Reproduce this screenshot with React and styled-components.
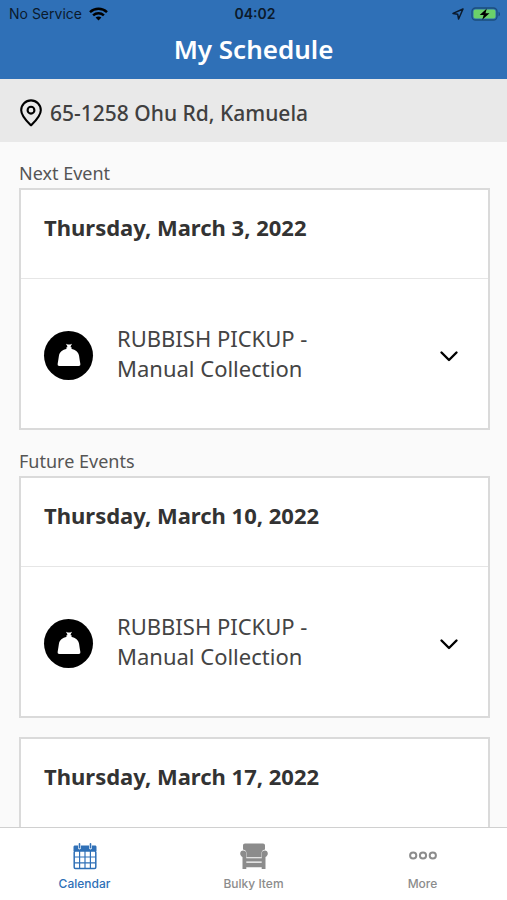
import React, { useState } from "react";
import styled, { createGlobalStyle } from "styled-components";

const GlobalStyle = createGlobalStyle`
  * { box-sizing: border-box; }
  body { margin: 0; background: #fafafa; }
`;

const Screen = styled.div`
  display: flex;
  flex-direction: column;
  height: 100vh;
  overflow: hidden;
  background: #fafafa;
  color: #333;
  font-family: "Noto Sans", sans-serif;
`;

const Header = styled.header`
  flex: none;
  background: #2f70b7;
  padding-bottom: 8px;
`;

const StatusBar = styled.div`
  display: grid;
  grid-template-columns: 1fr auto 1fr;
  align-items: center;
  height: 27px;
  padding: 0 6px 0 9px;
  color: #0b1a2c;
  font-family: Inter, sans-serif;
  font-size: 14px;
`;

const StatusGroup = styled.div`
  display: flex;
  align-items: center;
  justify-content: ${(p) => (p.$end ? "flex-end" : "flex-start")};
  gap: 7px;
`;

const Clock = styled.time`
  font-weight: 600;
`;

const Title = styled.h1`
  margin: 0;
  padding: 4px 0;
  color: #fff;
  font-size: 26px;
  line-height: 36px;
  font-weight: 600;
  text-align: center;
`;

const AddressBar = styled.address`
  flex: none;
  display: flex;
  align-items: center;
  gap: 7px;
  padding: 19px 19px 14px;
  background: #e9e9e9;
  color: #404040;
  font-size: 21px;
  line-height: 30px;
  font-weight: 500;
  font-style: normal;
`;

const Schedule = styled.main`
  flex: 1;
  min-height: 0;
  overflow-x: hidden;
  overflow-y: auto;
  scrollbar-width: none;
  padding: 0 17px 0 19px;
`;

const Section = styled.section`
  padding-top: 19px;
`;

const SectionLabel = styled.h2`
  margin: 0 0 3px;
  color: #555;
  font-size: 18px;
  line-height: 24px;
  font-weight: 400;
`;

const EventList = styled.div`
  display: flex;
  flex-direction: column;
  gap: 19px;
`;

const Card = styled.article`
  background: #fff;
  border: 2px solid #dadada;
`;

const DateHeading = styled.h3`
  margin: 0;
  padding: 22px 23px 36px;
  border-bottom: 1px solid #e6e6e6;
  font-size: 22px;
  line-height: 30px;
  font-weight: 700;
`;

const EventRow = styled.div`
  display: flex;
  align-items: center;
  padding: 44px 29px 41px 23px;
`;

const EventIcon = styled.span`
  flex: none;
  display: grid;
  place-items: center;
  width: 49px;
  height: 49px;
  margin-right: 24px;
  border-radius: 50%;
  background: #000;
`;

const EventName = styled.p`
  flex: 1;
  max-width: 220px;
  margin: 0;
  padding-bottom: 4px;
  color: #444;
  font-size: 22px;
  line-height: 30px;
`;

const ExpandButton = styled.button`
  display: grid;
  place-items: center;
  margin-left: auto;
  padding: 0;
  border: 0;
  background: none;
  cursor: pointer;
  transform: ${(p) => (p.$open ? "rotate(180deg)" : "none")};
`;

const TabBar = styled.nav`
  flex: none;
  display: grid;
  grid-template-columns: repeat(3, 1fr);
  height: 73px;
  border-top: 1px solid #d0d0d0;
  background: #fff;
`;

const Tab = styled.a`
  display: flex;
  flex-direction: column;
  align-items: center;
  gap: 6px;
  padding-top: 14px;
  color: ${(p) => (p.$active ? "#2f70b7" : "#8c8c8c")};
  text-decoration: none;
`;

const TabLabel = styled.span`
  font-family: Inter, sans-serif;
  font-size: 12px;
  line-height: 16px;
  font-weight: 500;
`;

const TabIcon = styled.svg`
  display: block;
  width: 30px;
  height: 28px;
`;

const WifiIcon = () => (
  <svg width="19" height="14" viewBox="0 0 19 14" fill="none" stroke="#000" strokeWidth="2.5" aria-hidden="true">
    <path d="M1 5.1C5.8.7 13.2.7 18 5.1" />
    <path d="M4.1 8.4c3.1-2.8 7.7-2.8 10.8 0" />
    <path d="M9.5 13.4 6.6 10.6c1.7-1.4 4.1-1.4 5.8 0z" fill="#000" stroke="none" />
  </svg>
);

const LocationIcon = () => (
  <svg width="12" height="12" viewBox="0 0 12 12" fill="none" stroke="#0b1a2c" strokeWidth="1.5" strokeLinejoin="round" aria-hidden="true">
    <path d="M11 1 1 5.4l4.7.9L6.6 11z" />
  </svg>
);

const BatteryIcon = () => (
  <svg width="30" height="14" viewBox="0 0 30 14" aria-hidden="true">
    <rect x="1" y="1" width="25" height="12" rx="3.5" fill="none" stroke="#1c4d7c" strokeWidth="1.3" />
    <rect x="2.5" y="2.5" width="22" height="9" rx="2" fill="#6bd06a" />
    <path d="M27.5 4.7c2 .6 2 4 0 4.6z" fill="#1c4d7c" />
    <path d="M15.8 1.5 8.7 8h4l-1.5 4.7L18.5 6.2h-4z" fill="#000" />
  </svg>
);

const PinIcon = () => (
  <svg width="24" height="28" viewBox="0 0 24 28" fill="none" stroke="#000" strokeWidth="2.1" strokeLinejoin="round" aria-hidden="true">
    <path d="M12 26.3C10.6 24.7 2.2 17.6 2.2 11.2a9.8 9.8 0 0 1 19.6 0C21.8 17.6 13.4 24.7 12 26.3z" />
    <circle cx="12" cy="11.2" r="3.4" />
  </svg>
);

const BagIcon = () => (
  <svg width="24" height="24" viewBox="0 0 24 24" fill="#fff" aria-hidden="true">
    <path d="M9 .8 10.8 1.5h2.4L15 .8l-1.3 2.5v1h.9v1.5h-.5c4.600 1 7.300 3.200 8 7.200.3 1.900.6 4.300 1.200 7.500.3 1.700-.3 2.500-1.700 2.500H2.400C1 23 .4 22.200.7 20.500c.6-3.200.9-5.600 1.200-7.500.7-4 3.400-6.200 8-7.200h-.5V4.300h.9v-1z" />
  </svg>
);

const ChevronIcon = () => (
  <svg width="20" height="20" viewBox="0 0 20 20" fill="none" stroke="#000" strokeWidth="2.4" strokeLinecap="round" strokeLinejoin="round" aria-hidden="true">
    <path d="m2.5 7.5 7.5 7.5 7.5-7.5" />
  </svg>
);

const CalendarIcon = () => (
  <TabIcon viewBox="0 0 30 28" fill="none" stroke="currentColor" aria-hidden="true">
    <path d="M3.500 9V5c0-1 .6-1.500 1.500-1.500h20c.9 0 1.500.5 1.500 1.500v4z" fill="currentColor" stroke="none" />
    <path d="M9.500 3v3M20.500 3v3" stroke="#fff" strokeWidth="2.800" strokeLinecap="round" />
    <path d="M9.500 1.800v4M20.500 1.800v4" strokeWidth="1.600" strokeLinecap="round" />
    <rect x="4.200" y="9" width="21.600" height="17.500" rx="1.200" strokeWidth="1.500" />
    <path d="M9.600 9v17.500M15 9v17.500M20.400 9v17.500M4.200 15h21.600M4.200 20.800h21.600" strokeWidth="1.200" />
  </TabIcon>
);

const ChairIcon = () => (
  <TabIcon viewBox="0 0 30 28" fill="currentColor" aria-hidden="true">
    <path d="M4 7.5V3.600c0-1.300.8-2.100 2-2.100h18c1.200 0 2 .8 2 2.100v3.900c-2.400.2-3.500 1.700-3.500 4v3.700h-15v-3.700c0-2.300-1.100-3.800-3.500-4z" />
    <path d="M1.200 11.600c0-1.900 1.200-3.100 3-3.100 1.900 0 3.100 1.200 3.100 3.100V27H3.500V15c-1.300-.5-2.300-1.800-2.300-3.400zM28.800 11.600c0-1.900-1.200-3.100-3-3.100-1.900 0-3.100 1.200-3.100 3.100V27h3.800V15c1.300-.5 2.300-1.800 2.300-3.400z" />
    <path d="M7 16.300h16v3.200H7zM7 20.800h16v4.500H7z" />
  </TabIcon>
);

const MoreIcon = () => (
  <TabIcon viewBox="0 0 30 28" fill="none" stroke="currentColor" strokeWidth="2" aria-hidden="true">
    <circle cx="5.2" cy="13.5" r="3.1" />
    <circle cx="15" cy="13.5" r="3.1" />
    <circle cx="24.8" cy="13.5" r="3.1" />
  </TabIcon>
);

function EventCard({ date }) {
  const [open, setOpen] = useState(false);
  return (
    <Card>
      <DateHeading>{date}</DateHeading>
      <EventRow>
        <EventIcon><BagIcon /></EventIcon>
        <EventName>RUBBISH PICKUP - Manual Collection</EventName>
        <ExpandButton type="button" aria-label={`Details for ${date}`} aria-expanded={open} $open={open} onClick={() => setOpen(!open)}>
          <ChevronIcon />
        </ExpandButton>
      </EventRow>
    </Card>
  );
}

const sections = [
  { label: "Next Event", dates: ["Thursday, March 3, 2022"] },
  { label: "Future Events", dates: ["Thursday, March 10, 2022", "Thursday, March 17, 2022"] },
];

const tabs = [
  { id: "calendar", label: "Calendar", Icon: CalendarIcon },
  { id: "bulky-item", label: "Bulky Item", Icon: ChairIcon },
  { id: "more", label: "More", Icon: MoreIcon },
];

export default function App() {
  return (
    <Screen>
      <GlobalStyle />
      <Header>
        <StatusBar>
          <StatusGroup>No Service<WifiIcon /></StatusGroup>
          <Clock>04:02</Clock>
          <StatusGroup $end><LocationIcon /><BatteryIcon /></StatusGroup>
        </StatusBar>
        <Title>My Schedule</Title>
      </Header>
      <AddressBar><PinIcon />65-1258 Ohu Rd, Kamuela</AddressBar>
      <Schedule>
        {sections.map(({ label, dates }) => (
          <Section key={label}>
            <SectionLabel>{label}</SectionLabel>
            <EventList>
              {dates.map((date) => <EventCard key={date} date={date} />)}
            </EventList>
          </Section>
        ))}
      </Schedule>
      <TabBar>
        {tabs.map(({ id, label, Icon }) => (
          <Tab key={id} href={`#${id}`} $active={id === "calendar"} aria-current={id === "calendar" ? "page" : undefined}>
            <Icon />
            <TabLabel>{label}</TabLabel>
          </Tab>
        ))}
      </TabBar>
    </Screen>
  );
}
